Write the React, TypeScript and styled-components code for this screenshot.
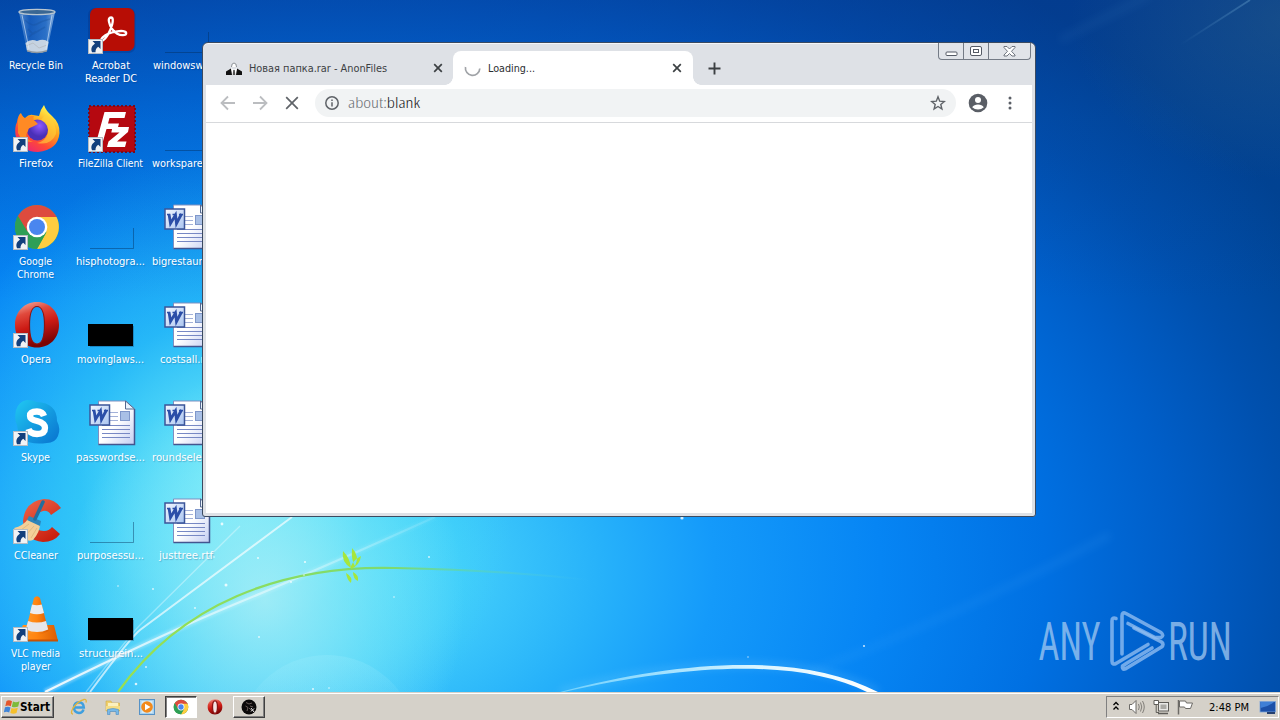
import React from "react";
import styled, { createGlobalStyle, css } from "styled-components";

const GlobalStyle = createGlobalStyle`
  * { box-sizing: border-box; }
  html, body { margin: 0; padding: 0; overflow: hidden; background: #0058b8; }
`;

const uiFont = css`
  font-family: "DejaVu Sans Condensed", "DejaVu Sans", sans-serif;
  font-stretch: condensed;
`;

const Screen = styled.div`
  width: 1280px;
  height: 720px;
  display: flex;
  flex-direction: column;
  overflow: hidden;
  ${uiFont}
  font-size: 11px;
`;

/* ---------- Desktop ---------- */

const Desktop = styled.main`
  position: relative;
  flex: 1;
  overflow: hidden;
  background:
    radial-gradient(ellipse 220px 160px at 1290px 20px, rgba(50, 100, 130, 0.4), rgba(50, 100, 130, 0)),
    linear-gradient(180deg, rgba(8, 50, 140, 0.4) 0, rgba(8, 60, 150, 0.22) 120px, rgba(8, 60, 150, 0) 300px),
    radial-gradient(ellipse 200px 230px at 265px 600px, rgba(190, 242, 246, 0.7), rgba(150, 236, 248, 0.42) 55%, rgba(120, 230, 250, 0)),
    radial-gradient(ellipse 290px 330px at 225px 480px, rgba(120, 240, 248, 0.85), rgba(60, 220, 245, 0.45) 50%, rgba(60, 215, 245, 0)),
    radial-gradient(ellipse 1100px 740px at 330px 570px, #55dcfb 0%, #42cdfb 12%, #26b1fa 25%, #149afa 35%, #0685f4 50%, #0070e2 65%, #005ec8 77%, #0050ae 87%, #004391 100%);
`;

const Wallpaper = styled.svg`
  position: absolute;
  inset: 0;
`;

const IconGrid = styled.div`
  position: relative;
  display: grid;
  grid-auto-flow: column;
  grid-template-rows: repeat(7, 98px);
  grid-auto-columns: 75px;
  margin-left: -2px;
  width: 226px;
`;

const Shortcut = styled.div`
  display: flex;
  flex-direction: column;
  align-items: center;
  padding-top: 7px;
`;

const IconBox = styled.div`
  position: relative;
  width: 48px;
  height: 48px;
  margin: 0 0 3px 2px;
  svg { display: block; overflow: visible; }
`;

const ArrowBadge = styled.svg`
  position: absolute;
  left: 0;
  bottom: 1px;
`;

const Label = styled.span<{ $w: number }>`
  width: ${(p) => p.$w}px;
  display: flex;
  flex-direction: column;
  align-items: center;
  line-height: 13px;
  color: #fff;
  text-shadow: 1px 1px 1px rgba(0, 40, 90, 0.25);
  svg { display: block; overflow: visible; }
`;

const Watermark = styled.svg`
  position: absolute;
  left: 1036px;
  top: 606px;
`;

/* Text set to an exact advance width, as a bitmap UI font lays it out. */
const Fit = ({ text, w, box, size = 11, h = 13, color = "#fff", weight = 400, base = 10.5 }: {
  text: string; w: number; box?: number; size?: number; h?: number; color?: string; weight?: number; base?: number;
}) => (
  <svg width={box ?? w} height={h} overflow="visible">
    <text x={0} y={base} fill={color} fontSize={size} fontWeight={weight}
      textLength={w} lengthAdjust="spacingAndGlyphs">{text}</text>
  </svg>
);

const Bin = () => (
  <svg width="48" height="48" viewBox="0 0 48 48">
    <defs>
      <linearGradient id="bin"><stop offset="0" stopColor="#8fb9e6" stopOpacity=".6" /><stop offset=".3" stopColor="#2a6ac4" stopOpacity=".5" /><stop offset=".75" stopColor="#4c8cd8" stopOpacity=".55" /><stop offset="1" stopColor="#b3d0ee" stopOpacity=".75" /></linearGradient>
    </defs>
    <path d="M6 5 H42 L34 44 Q24 48 14 44Z" fill="url(#bin)" />
    <path d="M12.500 36 Q18 31 24 34 Q31 31 35.500 35 L34 44 Q24 48 14 44Z" fill="#e4e6e8" opacity=".85" />
    <path d="M13 39 L20 36 L26 41 L34 38" stroke="#b9c0c8" fill="none" />
    <path d="M14 43 Q24 46.500 34 43 V44.500 Q24 48 14 44.500Z" fill="#8d969e" />
    <ellipse cx="24" cy="5" rx="18" ry="2.600" fill="#3a6793" stroke="#b9c6d0" strokeWidth="1.400" />
    <path d="M12 13 Q19 20 24 17 T37 12 M15 22 L20 27 L32 20 M16 30 L23 24" stroke="#174f9c" fill="none" opacity=".35" strokeWidth="1.500" />
    <path d="M9 8 L16 42" stroke="#dfeefc" opacity=".6" />
    <path d="M39 8 L33 42" stroke="#dfeefc" opacity=".6" />
  </svg>
);

const Acrobat = () => (
  <svg width="48" height="48" viewBox="0 0 48 48">
    <rect x="0" y="1" width="47.500" height="45" rx="7" fill="#062c78" opacity=".3" />
    <rect x="2" y="1" width="44.500" height="43" rx="6.500" fill="#b70d05" />
    <path d="M23 10.500c-2 0-2.600 1.800-2 4.200 1 5 4.300 9.500 8.200 12 3.500 2 9 2 9 -.500 0-2.400-5-2.500-9-1.900-5.500.8-11.500 3.200-14.500 6-2 1.900-1.600 3.600.2 3 3-1 7.500-9.300 9.200-15.500.9-3.500 1.300-7.300-1.100-7.300Z" fill="none" stroke="#fff" strokeWidth="2.300" />
  </svg>
);

const Firefox = () => (
  <svg width="48" height="48" viewBox="0 0 48 48">
    <defs>
      <linearGradient id="ff" x1=".8" y1="0" x2=".2" y2="1"><stop offset=".1" stopColor="#fff04a" /><stop offset=".4" stopColor="#ffa21c" /><stop offset=".7" stopColor="#ff4a35" /><stop offset="1" stopColor="#e8207e" /></linearGradient>
      <radialGradient id="ffp" cx=".6" cy=".3"><stop offset="0" stopColor="#9059ff" /><stop offset="1" stopColor="#4a30b8" /></radialGradient>
    </defs>
    <path d="M4 17 Q5 10 8 8 Q9 12 12 13 Q16 9 20 10 L26 11 Q27 5 31 0 Q33 6 39 11 Q47 18 46.500 28 Q45 45 25 47 Q7 47 2.500 30 Q1.500 22 4 17Z" fill="url(#ff)" />
    <circle cx="24.500" cy="25" r="10.500" fill="url(#ffp)" />
    <path d="M5 15 L8 9 L12 14 Q16 10 21 11 Q19 14 22 16 L25 19 L19 22 Q15 23 15 26 Q10 33 20 37 Q9 38 5 28Z" fill="#ff8a24" />
    <path d="M28 15 Q36 19 35 28 Q33 36 24 38 Q38 41 43 29 Q44 18 33 9Z" fill="#ffd23c" opacity=".6" />
  </svg>
);

const FileZilla = () => (
  <svg width="48" height="48" viewBox="0 0 48 48">
    <rect x="1" y="1" width="46" height="46" fill="#b50810" />
    <rect x="1" y="1" width="46" height="46" fill="none" stroke="#7a0a1c" strokeWidth="2" strokeDasharray="2 2" />
    <path d="M16.500 7 H38 L36.500 13 H21.500 L20 18.500 H31 L29.500 24 H18.500 L14.500 38 H8Z" fill="#fff" />
    <path d="M24.500 22 H41 L40 27 L29 36.500 H38.500 L37 42 H19 L20.500 36.500 L31.500 27.500 H23.300Z" fill="#fff" />
  </svg>
);

const ChromeLogo = ({ s = 48 }: { s?: number }) => (
  <svg width={s} height={s} viewBox="0 0 48 48">
    <circle cx="24" cy="24" r="22" fill="#4caf50" />
    <path d="M4.950 13 A22 22 0 0 1 43.050 13 L44 15 H24 L14.500 29.500Z" fill="#dd4b3e" />
    <path d="M43.500 14 A22 22 0 0 1 24 46 L33.500 29 L24 14Z" fill="#ffcd40" />
    <path d="M4.950 13 A22 22 0 0 0 24 46 L33 30 L24 34 L14 28Z" fill="#2e9f56" />
    <circle cx="24" cy="24" r="10.300" fill="#fff" />
    <circle cx="24" cy="24" r="8" fill="#4a86ef" />
  </svg>
);

const OperaLogo = ({ s = 48, id = "op" }: { s?: number; id?: string }) => (
  <svg width={s} height={s} viewBox="0 0 48 48">
    <defs><linearGradient id={id} x1="0" y1="0" x2=".3" y2="1"><stop offset="0" stopColor="#f6b7aa" /><stop offset=".3" stopColor="#e0493c" /><stop offset=".6" stopColor="#cc1a14" /><stop offset="1" stopColor="#7c0404" /></linearGradient></defs>
    <path fillRule="evenodd" d="M24 1 C37 1 46 11 46 24 S37 46.500 24 46.500 2 37 2 24 11 1 24 1Z M24 5.500 C19 5.500 16.500 13 16.500 24 S19 43 24 43 31.500 35 31.500 24 29 5.500 24 5.500Z" fill={`url(#${id})`} />
    <path d="M24 5.500 C19 5.500 16.500 13 16.500 24 S19 43 24 43 31.500 35 31.500 24 29 5.500 24 5.500Z" fill={s < 20 ? "#f4e4e2" : "none"} stroke="#8b1413" strokeWidth={s < 20 ? 4 : 1.2} />
  </svg>
);

const Skype = () => (
  <svg width="48" height="48" viewBox="0 0 48 48">
    <defs><linearGradient id="sk" x1="0" y1="0" x2="1" y2="1"><stop offset=".1" stopColor="#1ec0ef" /><stop offset="1" stopColor="#0872cf" /></linearGradient></defs>
    <path d="M14 1 Q20 1 24 3 Q44 4 44 22 Q48 30 45 37 Q42 44 34 44 Q6 48 4 26 Q1 20 3 11 Q6 2 14 1Z" fill="url(#sk)" />
    <path d="M31 17 Q29.500 12.500 24 12.500 Q17 12.500 17 17 Q17 20.500 24 22 Q32 24 32 29 Q32 35 24 35 Q17 35 15.500 30" fill="none" stroke="#fff" strokeWidth="6.300" />
  </svg>
);

const CCleaner = () => (
  <svg width="48" height="48" viewBox="0 0 48 48">
    <defs><linearGradient id="cc" x1="0" y1="0" x2=".6" y2="1"><stop offset="0" stopColor="#f0684c" /><stop offset="1" stopColor="#c9200f" /></linearGradient></defs>
    <path d="M48 11 L38 18 Q35 13 30 14 Q21 16 21 25 Q22 34 31 34 Q36 34 39 30 L47 37 Q41 45 30 45 Q11 43 10 24 Q12 4 31 2 Q42 2 48 11Z" fill="url(#cc)" />
    <path d="M1 31 Q10 29 15 22 L27 27 Q27 35 20 43 Q12 47 1 31Z" fill="#f4cf98" />
    <path d="M8 33 L16 27 M13 38 L21 29 M18 41 L24 31" stroke="#e2bb80" />
    <path d="M16 19 L28 24 L27 29 L14 23Z" fill="#2f86ba" />
    <path d="M22 22 L30 5" stroke="#246e9e" strokeWidth="3.500" strokeLinecap="round" />
  </svg>
);

const Vlc = () => (
  <svg width="48" height="48" viewBox="0 0 48 48">
    <defs><linearGradient id="vl"><stop offset="0" stopColor="#ff9a2a" /><stop offset=".5" stopColor="#ff8410" /><stop offset="1" stopColor="#d95d04" /></linearGradient></defs>
    <path d="M10 30 H41 L45 46 H2Z" fill="url(#vl)" />
    <path d="M2 44.500 H45 V46.500 H2Z" fill="#c85204" />
    <path d="M21 3 Q24 -.5 27 3 L35.500 36 Q24 43 12.500 36Z" fill="url(#vl)" />
    <path d="M19 9.500 Q24 11 28.700 9.500 L31 18 Q24 20.500 17 18Z" fill="#ececee" />
    <path d="M15 26 Q24 29 33 26 L35.200 34.500 Q24 39.500 12.800 34.500Z" fill="#e6e6ea" />
  </svg>
);

const WordDoc = () => (
  <svg width="48" height="48" viewBox="0 0 48 48">
    <defs>
      <linearGradient id="wd" x1="0" y1="0" x2="1" y2="1"><stop offset=".5" stopColor="#fff" /><stop offset="1" stopColor="#c2cdf2" /></linearGradient>
      <linearGradient id="wb" x1="0" y1="0" x2="1" y2="1"><stop offset="0" stopColor="#f4f8ff" /><stop offset="1" stopColor="#a9c4f0" /></linearGradient>
    </defs>
    <path d="M10.500 2 H38 L46.500 10 V45.500 H10.500Z" fill="url(#wd)" stroke="#7f8fc0" />
    <path d="M46.500 10 V45.500 H10.500" fill="none" stroke="#43558f" strokeWidth="1.500" />
    <path d="M37.500 2 V10 H46.500Z" fill="#e9f3fd" stroke="#54688f" />
    <path d="M22 13.500 H30 M22 17.500 H30 M22 21.500 H30" stroke="#a3b1d8" />
    <path d="M14 26.500 H42 M14 30.500 H42 M14 34.500 H42 M14 38.500 H42" stroke="#7788c4" />
    <rect x="32.500" y="12.500" width="9" height="9" fill="#a9c0e6" stroke="#7f97ca" />
    <rect x="2" y="6" width="19.500" height="20" fill="url(#wb)" stroke="#3b5599" strokeWidth="1.500" />
    <path d="M4 11.500 H7 M9.500 11.500 H13 M16 11.500 H20" stroke="#2b4ea8" strokeWidth="1.500" />
    <path d="M6 11 L7.500 20.500 L12.500 12 L13.500 20.500 L18.500 11" fill="none" stroke="#2b4ea8" strokeWidth="2.800" />
  </svg>
);

const Thumb = ({ black }: { black?: boolean }) => (
  <svg width="48" height="48" viewBox="0 0 48 48">
    {black && <rect x="0" y="23" width="45" height="22" fill="#000" />}
    <path d="M2 45.500 H45.500 V25" fill="none" stroke="#052c55" strokeOpacity={black ? 0.3 : 0.42} />
  </svg>
);

const LinkBadge = () => (
  <ArrowBadge width="15" height="15" viewBox="0 0 15 15">
    <rect x=".5" y=".5" width="14" height="14" fill="#f1f3f5" stroke="#b6bcc3" />
    <path d="M4.500 2 H12.500 V10 L10.300 7.800 Q7.300 9.500 7.500 13.300 H4 Q1.800 8.500 7 4.600Z" fill="#123f7c" />
  </ArrowBadge>
);

type Item = { icon: React.ReactNode; lines: [string, number, number?][]; link?: boolean };

const items: Item[] = [
  { icon: <Bin />, lines: [["Recycle Bin", 54]] },
  { icon: <Firefox />, lines: [["Firefox", 34]], link: true },
  { icon: <ChromeLogo />, lines: [["Google", 33], ["Chrome", 37]], link: true },
  { icon: <OperaLogo />, lines: [["Opera", 30]], link: true },
  { icon: <Skype />, lines: [["Skype", 29]], link: true },
  { icon: <CCleaner />, lines: [["CCleaner", 44]], link: true },
  { icon: <Vlc />, lines: [["VLC media", 49], ["player", 30]], link: true },
  { icon: <Acrobat />, lines: [["Acrobat", 38], ["Reader DC", 52]], link: true },
  { icon: <FileZilla />, lines: [["FileZilla Client", 65]], link: true },
  { icon: <Thumb />, lines: [["hisphotogra...", 69]] },
  { icon: <Thumb black />, lines: [["movinglaws...", 67]] },
  { icon: <WordDoc />, lines: [["passwordse...", 69]] },
  { icon: <Thumb />, lines: [["purposessu...", 67]] },
  { icon: <Thumb black />, lines: [["structurein...", 64]] },
  { icon: <Thumb />, lines: [["windowswe...", 66]] },
  { icon: <Thumb />, lines: [["workspare...", 60, 68]] },
  { icon: <WordDoc />, lines: [["bigrestaur...", 59, 68]] },
  { icon: <WordDoc />, lines: [["costsall.rtf", 52]] },
  { icon: <WordDoc />, lines: [["roundselec...", 65, 68]] },
  { icon: <WordDoc />, lines: [["justtree.rtf", 54]] },
];

const sparkles = [
  [222, 524, 1.4], [258, 558, 1], [305, 562, 1.1], [304, 575, 0.8], [226, 585, 1.5], [195, 608, 0.9], [153, 589, 0.9],
  [118, 586, 0.8], [214, 557, 0.8], [291, 582, 0.9], [429, 557, 0.9], [394, 597, 0.8], [259, 637, 0.9], [136, 684, 1.3],
  [146, 667, 0.9], [313, 689, 1], [329, 688, 0.8], [864, 646, 1], [748, 657, 0.7], [682, 518, 1.6],
];

const Backdrop = () => (
  <Wallpaper width="1280" height="692" viewBox="0 0 1280 692">
    <defs>
      <filter id="soft1"><feGaussianBlur stdDeviation="1" /></filter>
      <filter id="soft4" x="-20%" y="-40%" width="140%" height="180%"><feGaussianBlur stdDeviation="4" /></filter>
      <linearGradient id="stem" gradientUnits="userSpaceOnUse" x1="110" y1="0" x2="590" y2="0"><stop offset="0" stopColor="#9ae04e" /><stop offset=".6" stopColor="#7cda70" /><stop offset=".75" stopColor="#5fd6a8" stopOpacity=".6" /><stop offset="1" stopColor="#4cc8f0" stopOpacity="0" /></linearGradient>
      <linearGradient id="arc" gradientUnits="userSpaceOnUse" x1="560" y1="0" x2="880" y2="0"><stop offset="0" stopColor="#8fe0ff" stopOpacity=".7" /><stop offset=".6" stopColor="#d8f4ff" /><stop offset="1" stopColor="#fff" /></linearGradient>
      <linearGradient id="ray" x1="0" y1="1" x2="1" y2="0"><stop offset="0" stopColor="#fff" stopOpacity=".9" /><stop offset=".5" stopColor="#fff" stopOpacity=".5" /><stop offset="1" stopColor="#fff" stopOpacity=".1" /></linearGradient>
      <linearGradient id="bub" x1="0" y1="0" x2="0" y2=".3"><stop offset="0" stopColor="#b8f4ff" stopOpacity=".17" /><stop offset="1" stopColor="#b8f4ff" stopOpacity=".04" /></linearGradient>
      <linearGradient id="streak" gradientUnits="userSpaceOnUse" x1="1180" y1="45" x2="1250" y2="0"><stop offset="0" stopColor="#6aa4cf" stopOpacity="0" /><stop offset="1" stopColor="#6aa4cf" stopOpacity=".4" /></linearGradient>
    </defs>
    <circle cx="327" cy="745" r="90" fill="url(#bub)" />
    <path d="M810 672 Q960 615 1110 535" fill="none" stroke="#5db6ff" strokeWidth="6" opacity=".13" filter="url(#soft4)" />
    <path d="M45 692 Q160 635 240 602 T435 517" fill="none" stroke="url(#ray)" strokeWidth="6" opacity=".35" filter="url(#soft1)" />
    <path d="M45 692 Q160 635 240 602 T435 517" fill="none" stroke="url(#ray)" strokeWidth="2.200" />
    <path d="M90 692 Q130 638 140 630 L292 517" fill="none" stroke="#fff" strokeOpacity=".65" strokeWidth="2" />
    <path d="M86 692 Q130 635 140 625 L240 526" fill="none" stroke="#fff" strokeOpacity=".35" strokeWidth="1.300" />
    <path d="M118 692 C180 605 280 565 395 568 Q500 570 590 580" fill="none" stroke="url(#stem)" strokeWidth="2.200" />
    <path d="M343 551 Q341 562 351 568 Q350 558 343 551Z M352 548 Q351 560 355 566 Q360 556 352 548Z M361 556 Q360 565 351 569 Q350 562 361 556Z M346 573 Q347 580 351 583 Q353 577 346 573Z M353 572 Q359 575 358 581 Q353 579 353 572Z" fill="#a6e63c" />
    <path d="M560 692 C680 660 800 652 878 692" fill="none" stroke="#a5e4ff" strokeWidth="5" opacity=".25" filter="url(#soft4)" />
    <path d="M560 692 C680 660 800 652 878 692 L867 692 C800 659 690 663 564 692Z" fill="url(#arc)" />
    <path d="M1180 45 L1250 0" fill="none" stroke="url(#streak)" strokeWidth="1.800" />
    <path d="M1060 40 L1150 -5" fill="none" stroke="#4a88c8" strokeWidth="7" opacity=".12" filter="url(#soft4)" />
    {sparkles.map(([x, y, r], i) => <circle key={i} cx={x} cy={y} r={r} fill="#fff" opacity=".8" />)}
  </Wallpaper>
);

/* ---------- Browser window ---------- */

const BrowserWindow = styled.section`
  position: absolute;
  left: 202px;
  top: 42px;
  width: 834px;
  height: 475px;
  display: flex;
  flex-direction: column;
  padding: 0 3px 3px;
  background: #dee1e6;
  border: 1px solid #3b4a60;
  border-radius: 6px 6px 3px 3px;
  box-shadow: inset 0 1px 0 #f4f6f9;
`;

const TabStrip = styled.div`
  display: flex;
  height: 42px;
  padding: 8px 0 0 11px;
  color: #3c4043;
`;

const Tab = styled.div<{ $active?: boolean }>`
  position: relative;
  display: flex;
  align-items: center;
  width: ${(p) => (p.$active ? 240 : 236)}px;
  height: 34px;
  padding: 0 ${(p) => (p.$active ? 11 : 10)}px 0 ${(p) => (p.$active ? 11 : 9)}px;
  border-radius: 8px 8px 0 0;
  background: ${(p) => (p.$active ? "#fff" : "transparent")};
  ${(p) => p.$active && css`
    &::before, &::after {
      content: "";
      position: absolute;
      bottom: 0;
      width: 8px;
      height: 8px;
    }
    &::before { left: -8px; background: radial-gradient(circle at 0 0, transparent 7.5px, #fff 8px); }
    &::after { right: -8px; background: radial-gradient(circle at 100% 0, transparent 7.5px, #fff 8px); }
  `}
`;

const TabIcon = styled.span<{ $gap?: number }>`
  display: flex;
  width: 17px;
  margin: 2px ${(p) => p.$gap ?? 7}px 0 0;
`;

const TabTitle = styled.span`
  display: flex;
  flex: 1;
  padding-bottom: 2px;
`;

const NewTab = styled.span`
  display: flex;
  align-items: center;
  padding-left: 15px;
  height: 34px;
`;

const CaptionButtons = styled.div`
  position: absolute;
  top: 0;
  right: 4px;
  width: 93px;
  height: 17px;
  display: flex;
  border: 1px solid #747b86;
  border-top: 0;
  border-radius: 0 0 4px 4px;
  background: #e1e4e9;
`;

const CaptionButton = styled.span<{ $w: number }>`
  width: ${(p) => p.$w}px;
  display: flex;
  align-items: center;
  justify-content: center;
  & + & { border-left: 1px solid #747b86; }
`;

const Toolbar = styled.div`
  height: 38px;
  display: flex;
  align-items: center;
  background: #fff;
  border-bottom: 1px solid #d7d9dc;
  padding: 0 12px 2px 12px;
`;

const NavButton = styled.span`
  display: flex;
  justify-content: center;
  width: 20px;
  margin-right: 12px;
`;

const AddressBar = styled.div`
  display: flex;
  align-items: center;
  width: 642px;
  height: 28px;
  margin-left: 1px;
  padding: 0 10px 0 9px;
  border-radius: 14px;
  background: #f1f3f4;
`;

const Url = styled.span`
  display: flex;
  flex: 1;
  margin-left: 8px;
`;

const BarAction = styled.span`
  display: flex;
  justify-content: center;
  width: 20px;
  margin-left: 12px;
`;

const PageArea = styled.div`
  flex: 1;
  background: #fff;
`;

const CloseX = () => (
  <svg width="10" height="10" viewBox="0 0 10 10"><path d="M1.200 1.200 L8.800 8.800 M8.800 1.200 L1.200 8.800" stroke="#3c4043" strokeWidth="1.700" /></svg>
);

const Arrow = ({ flip }: { flip?: boolean }) => (
  <svg width="16" height="16" viewBox="0 0 16 16">
    <path d={flip ? "M1 8 H14 M8 1.500 L14.500 8 L8 14.500" : "M15 8 H2 M8 1.500 L1.500 8 L8 14.500"} fill="none" stroke="#bbbdc0" strokeWidth="1.800" />
  </svg>
);

const Browser = () => (
  <BrowserWindow>
    <CaptionButtons>
      <CaptionButton $w={24}><svg width="13" height="17"><rect x="1" y="9" width="11" height="3.500" rx="1" fill="#fff" stroke="#555b66" /></svg></CaptionButton>
      <CaptionButton $w={25}><svg width="12" height="11"><rect x=".5" y=".5" width="11" height="9" rx="1.500" fill="#fff" stroke="#555b66" /><rect x="3.500" y="3.500" width="5" height="3" fill="#fff" stroke="#555b66" /></svg></CaptionButton>
      <CaptionButton $w={42}><svg width="13" height="11" viewBox="0 0 13 11"><path d="M1 .5 H4 L6.500 3 L9 .5 H12 V1.500 L8.500 5.300 L12 9 V10 H9 L6.500 7.500 L4 10 H1 V9 L4.500 5.300 L1 1.500Z" fill="#fff" stroke="#5f6570" strokeWidth=".9" /></svg></CaptionButton>
    </CaptionButtons>
    <TabStrip>
      <Tab>
        <TabIcon $gap={6}>
          <svg width="16" height="14" viewBox="0 0 16 14">
            <path d="M0 13 V9.500 L5 6.500 L7 13Z M16 13 V9.500 L11 6.500 L9 13Z" fill="#111" />
            <path d="M5.500 5 Q5.500 1 8 1 T10.500 5" fill="#fff" stroke="#8a8f95" />
            <path d="M5 6 L8 8 L11 6 L10 13 H6Z" fill="#fff" />
            <path d="M7.200 8 H8.800 L9.300 13 H6.700Z" fill="#555" />
          </svg>
        </TabIcon>
        <TabTitle><Fit text="Новая папка.rar - AnonFiles" w={138} color="#3c4043" /></TabTitle>
        <CloseX />
      </Tab>
      <Tab $active>
        <TabIcon>
          <svg width="17" height="16" viewBox="0 0 17 16"><path d="M1.500 6 A7.200 7.200 0 1 0 15.800 7.500" fill="none" stroke="#a0a3a7" strokeWidth="1.700" /></svg>
        </TabIcon>
        <TabTitle><Fit text="Loading..." w={47} color="#2b2e31" /></TabTitle>
        <CloseX />
      </Tab>
      <NewTab><svg width="13" height="13" viewBox="0 0 13 13"><path d="M6.500 .5 V12.500 M.5 6.500 H12.500" stroke="#3c4043" strokeWidth="1.900" /></svg></NewTab>
    </TabStrip>
    <Toolbar>
      <NavButton><Arrow /></NavButton>
      <NavButton><Arrow flip /></NavButton>
      <NavButton><svg width="14" height="14" viewBox="0 0 14 14"><path d="M1.200 1.200 L12.800 12.800 M12.800 1.200 L1.200 12.800" stroke="#5f6368" strokeWidth="1.700" /></svg></NavButton>
      <AddressBar>
        <svg width="16" height="16" viewBox="0 0 16 16"><circle cx="8" cy="8" r="6.200" fill="none" stroke="#5f6368" strokeWidth="1.500" /><path d="M8 7.200 V11.500 M8 4.500 V6" stroke="#5f6368" strokeWidth="1.500" /></svg>
        <Url>
          <svg width="73" height="16" overflow="visible">
            <text x="0" y="12.500" fontSize="14" fontFamily="Open Sans, sans-serif" fontWeight="300" textLength="72" lengthAdjust="spacingAndGlyphs">
              <tspan fill="#6c7075">about:</tspan><tspan fill="#202124">blank</tspan>
            </text>
          </svg>
        </Url>
        <svg width="16" height="16" viewBox="0 0 16 16"><path d="M8 1.800 L9.700 6.200 L14.300 6.500 L10.800 9.500 L11.900 14 L8 11.500 L4.100 14 L5.200 9.500 L1.700 6.500 L6.300 6.200Z" fill="none" stroke="#5f6368" strokeWidth="1.400" /></svg>
      </AddressBar>
      <BarAction>
        <svg width="20" height="20" viewBox="0 0 20 20"><circle cx="10" cy="10" r="9.300" fill="#5a5e66" /><circle cx="10" cy="7" r="3" fill="#fff" /><path d="M4.200 14.200 Q6 11.500 10 11.500 T15.800 14.200 Q13.500 16.500 10 16.500 T4.200 14.200Z" fill="#fff" /></svg>
      </BarAction>
      <BarAction>
        <svg width="4" height="14"><circle cx="2" cy="2" r="1.500" fill="#5a5e66" /><circle cx="2" cy="7" r="1.500" fill="#5a5e66" /><circle cx="2" cy="12" r="1.500" fill="#5a5e66" /></svg>
      </BarAction>
    </Toolbar>
    <PageArea />
  </BrowserWindow>
);

/* ---------- Taskbar ---------- */

const Taskbar = styled.footer`
  height: 28px;
  display: flex;
  align-items: center;
  background: #d5d1c9;
  border-top: 1px solid #d5d1c9;
  box-shadow: inset 0 1px 0 #fff;
  padding-top: 1px;
`;

const raised = css`
  border: 1px solid;
  border-color: #fff #404040 #404040 #fff;
  box-shadow: inset -1px -1px 0 #808080;
`;

const StartButton = styled.button`
  display: flex;
  align-items: center;
  width: 53px;
  height: 22px;
  margin: 0 9px 0 1px;
  padding: 0 2px;
  background: #d5d1c9;
  border-radius: 0;
  ${uiFont}
  ${raised}
`;

const TaskButton = styled.span<{ $state?: "pressed" | "raised" }>`
  display: flex;
  align-items: center;
  justify-content: center;
  width: 32px;
  height: 22px;
  margin-right: 2px;
  ${(p) => p.$state === "raised" && raised}
  ${(p) => p.$state === "pressed" && css`
    background: #fff;
    border: 1px solid;
    border-color: #404040 #fff #fff #404040;
    box-shadow: inset 1px 1px 0 #808080;
  `}
`;

const Tray = styled.div`
  display: flex;
  align-items: center;
  width: 173px;
  height: 22px;
  margin: 0 1px 0 auto;
  padding: 0 2px 0 6px;
  border: 1px solid;
  border-color: #808080 #fff #fff #808080;
`;

const TrayIcon = styled.span<{ $gap: number }>`
  display: flex;
  margin-right: ${(p) => p.$gap}px;
`;

const Clock = styled.span`
  display: flex;
  padding-bottom: 1px;
`;

const WinFlag = () => (
  <svg width="16" height="16" viewBox="0 0 16 16">
    <path d="M2.500 2 Q5 .5 8 2.300 L6.800 7.300 Q4 5.800 1.300 7.200Z" fill="#e4562a" />
    <path d="M9 2.600 Q12 4 15.500 2.300 L14.200 7.600 Q11 9 7.800 7.700Z" fill="#7dbb3c" />
    <path d="M1 8.300 Q4 7 6.500 8.400 L5.200 13.500 Q2.500 12 -.2 13.300Z" fill="#3f85d8" />
    <path d="M7.500 8.900 Q10.500 10.200 13.800 8.800 L12.500 14 Q9.500 15.300 6.300 14Z" fill="#f5c02c" />
  </svg>
);

const Bar = () => (
  <Taskbar>
    <StartButton><WinFlag /><Fit text="Start" w={30} h={15} size={12} weight={700} color="#000" base={11} /></StartButton>
    <TaskButton>
      <svg width="18" height="18" viewBox="0 0 18 18">
        <path d="M13.500 11.500 Q12.500 15 9 15 Q4 14.500 4 9.500 Q4.200 4.500 9 4.300 Q13.500 4.500 13.800 9.500 H5" fill="none" stroke="#3f9fdf" strokeWidth="2.500" />
        <path d="M3 16 Q0 16 3 10 Q8 3 14 1.500 Q17 1 16 4.500" fill="none" stroke="#e2b53c" strokeWidth="1.300" />
      </svg>
    </TaskButton>
    <TaskButton>
      <svg width="18" height="18" viewBox="0 0 18 18">
        <path d="M2 3 H7 L8 5 H15.500 V13 H2Z" fill="#efcf6c" stroke="#d2ac45" strokeWidth=".6" />
        <path d="M4 5 H14 V8 H4Z" fill="#fbf0be" /><path d="M2 8 H16 V12 H2Z" fill="#f5dd85" />
        <path d="M3.500 16.500 V11.500 Q9 9.500 14.500 11.500 V16.500 H12 V13.500 H6 V16.500Z" fill="#78b9e8" stroke="#4a8cc4" strokeWidth=".6" />
      </svg>
    </TaskButton>
    <TaskButton>
      <svg width="18" height="18" viewBox="0 0 18 18">
        <rect x="1.500" y="1.500" width="15" height="15" fill="#a9d2ee" stroke="#5692c6" />
        <rect x="3.500" y="3" width="11" height="12" fill="#d5ebf8" />
        <circle cx="9" cy="9" r="5.800" fill="#f28a1c" /><path d="M7 5.800 L12.500 9 L7 12.200Z" fill="#fff" />
      </svg>
    </TaskButton>
    <TaskButton $state="pressed"><ChromeLogo s={16} /></TaskButton>
    <TaskButton><OperaLogo s={16} id="opt" /></TaskButton>
    <TaskButton $state="raised">
      <svg width="16" height="16" viewBox="0 0 16 16">
        <circle cx="8" cy="8" r="7.500" fill="#0c0a0a" />
        <path d="M5 3.500 L8 5 L11 4 M4.500 7 L7 8.500 L6 12 M9 7 L12 8 M8 9 L11 12" stroke="#80706c" fill="none" strokeWidth=".8" />
        <path d="M10 9 L13 13 M13 9.500 L10 12.500" stroke="#eee" />
      </svg>
    </TaskButton>
    <Tray>
      <TrayIcon $gap={9}><svg width="6" height="12" viewBox="0 0 6 12"><path d="M.5 4 L3 1.500 L5.500 4 M.5 8.500 L3 6 L5.500 8.500" fill="none" stroke="#000" strokeWidth="1.300" /></svg></TrayIcon>
      <TrayIcon $gap={7}>
        <svg width="18" height="16" viewBox="0 0 18 16"><path d="M1.500 5.500 H4 L8 1.500 V14.500 L4 10.500 H1.500Z" fill="#fff" stroke="#6c6a66" /><path d="M10.500 5 Q12 8 10.500 11 M12.500 3.500 Q15 8 12.500 12.500 M14.500 2 Q18 8 14.500 14" fill="none" stroke="#77746f" strokeWidth=".9" /></svg>
      </TrayIcon>
      <TrayIcon $gap={8}>
        <svg width="16" height="16" viewBox="0 0 16 16"><rect x="5.500" y="3.500" width="10" height="8.500" fill="#e8e8e6" stroke="#5f5d59" /><rect x="7.500" y="5.500" width="6" height="4.500" fill="#aaa9a5" /><path d="M5 14.500 H15" stroke="#5f5d59" strokeWidth="1.500" /><path d="M1 1.500 H5.500 V5.500 H1Z" fill="#fff" stroke="#5f5d59" /><path d="M3.200 5.500 V13.500 H6" fill="none" stroke="#5f5d59" /></svg>
      </TrayIcon>
      <TrayIcon $gap={15}>
        <svg width="17" height="16" viewBox="0 0 17 16"><path d="M1.500 1 V15.500" stroke="#6c6a66" strokeWidth="1.500" /><path d="M2.500 2 H8.500 L9.500 4 H15.500 L13.500 9.500 H8.500 L7.500 8 H2.500Z" fill="#fff" stroke="#6c6a66" /></svg>
      </TrayIcon>
      <Clock><Fit text="2:48 PM" w={40} color="#000" /></Clock>
      <TrayIcon $gap={0}>
        <svg width="27" height="16" viewBox="-11 0 27 16">
          <rect x="0" y="2.500" width="15.500" height="10.500" fill="#1c50a8" stroke="#7ea6da" strokeWidth=".8" />
          <path d="M.5 9 Q8 8 14 3 H.5Z" fill="#3f7fd6" /><path d="M7 13 H15 V15 H7Z" fill="#26406e" />
        </svg>
      </TrayIcon>
    </Tray>
  </Taskbar>
);

export default function App() {
  return (
    <Screen>
      <GlobalStyle />
      <Desktop>
        <Backdrop />
        <IconGrid>
          {items.map((it, i) => (
            <Shortcut key={i}>
              <IconBox>{it.icon}{it.link && <LinkBadge />}</IconBox>
              <Label $w={72}>{it.lines.map(([t, w, box]) => <Fit key={t} text={t} w={w} box={box} />)}</Label>
            </Shortcut>
          ))}
        </IconGrid>
        <Browser />
        <Watermark width="230" height="80" viewBox="0 0 230 80" fill="none">
          <g fill="#a9cdf2" fillOpacity=".72" fontFamily="Roboto, sans-serif" fontSize="53" fontWeight="400">
            <text x="2.500" y="53.500" textLength="62" lengthAdjust="spacingAndGlyphs">ANY</text>
            <text x="132" y="53.500" textLength="64" lengthAdjust="spacingAndGlyphs">RUN</text>
          </g>
          <g stroke="#8dbcf0" strokeOpacity=".8" strokeWidth="3.600" strokeLinejoin="round" strokeLinecap="round">
            <path d="M80 12.500 Q76 11 76 15 V55 Q76 59 80 57.500 L112 38.500" />
            <path d="M86 48 V10 Q86 5.500 90 7.500 L125 26.500 Q128.500 29.500 125 31.500 L119 31.500 L92 17.500" />
            <path d="M98 22 L125.500 36 Q128.500 38.500 125.500 41 L90 62.500 Q85.500 64.500 86.500 60 L91 57 L116 42" />
          </g>
        </Watermark>
      </Desktop>
      <Bar />
    </Screen>
  );
}
